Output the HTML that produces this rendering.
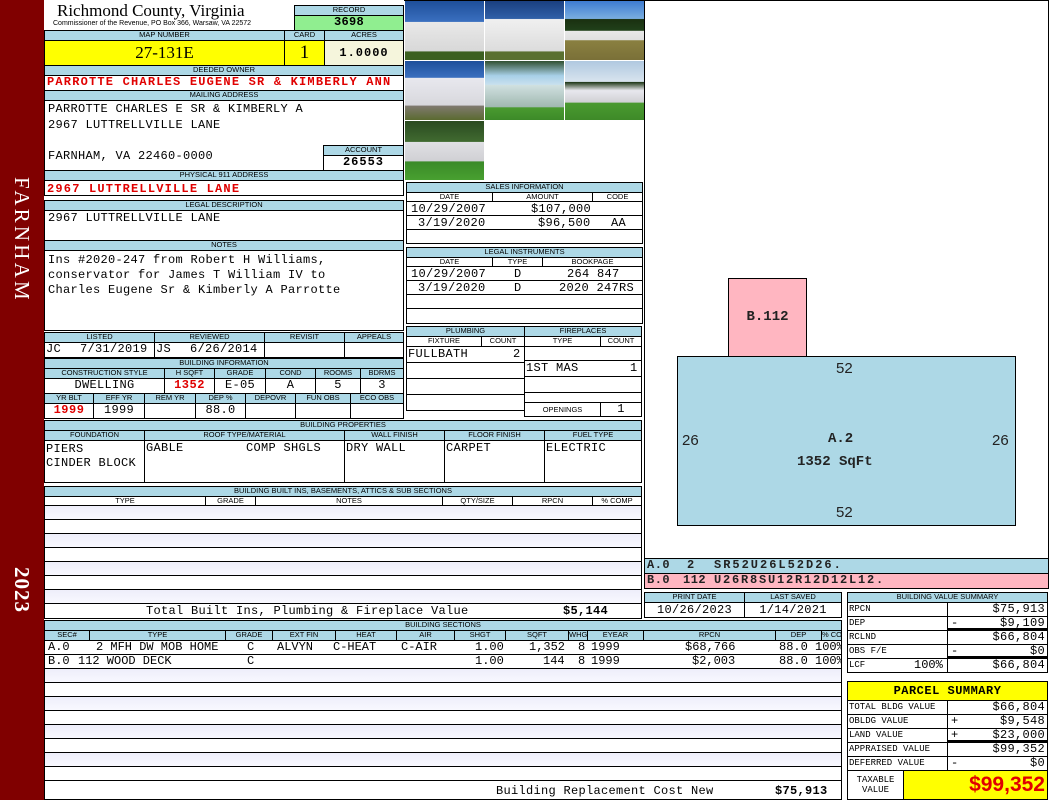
<!DOCTYPE html>
<html><head><meta charset="utf-8">
<style>
*{margin:0;padding:0;box-sizing:border-box}
body{width:1050px;height:800px;position:relative;background:#fff;overflow:hidden;font-family:"Liberation Mono",monospace;font-size:12px;color:#000}
.a{position:absolute}
.c{position:absolute;border:1px solid #000;overflow:hidden;white-space:nowrap}
.h{background:#add8e6;font-family:"Liberation Sans",sans-serif;font-size:7.5px;text-align:center;line-height:8px;letter-spacing:0}
.v{font-family:"Liberation Mono",monospace;font-size:12px;line-height:13px;letter-spacing:0.3px}
.ctr{text-align:center}
.r{text-align:right;padding-right:2px}
.red{color:#e00000;font-weight:bold;letter-spacing:1.2px}
.lav{background:linear-gradient(#eeeefa,#f8f8ff)}
.ph{position:absolute;width:79px;height:59px;overflow:hidden}
</style></head><body>
<div class="a" style="left:0;top:0;width:44px;height:800px;background:#800000"></div>
<div class="a" style="left:7px;top:177px;width:30px;height:130px;color:#fff;font-family:'Liberation Serif',serif;font-size:21px;letter-spacing:3.2px;writing-mode:vertical-rl;line-height:30px">FARNHAM</div>
<div class="a" style="left:7px;top:567px;width:30px;height:60px;color:#fff;font-family:'Liberation Serif',serif;font-size:21px;font-weight:bold;letter-spacing:1px;writing-mode:vertical-rl;line-height:30px">2023</div>

<div class="a" style="left:57px;top:1px;font-family:'Liberation Serif',serif;font-size:17px;line-height:20px">Richmond County, Virginia</div>
<div class="a" style="left:53px;top:19px;font-family:'Liberation Sans',sans-serif;font-size:7px;line-height:9px">Commissioner of the Revenue, PO Box 366, Warsaw, VA 22572</div>
<div class="c h" style="left:294px;top:5px;width:110px;height:11px">RECORD</div>
<div class="c v ctr" style="left:294px;top:15px;width:110px;height:16px;background:#90ee90;font-weight:bold">3698</div>

<div class="c h" style="left:44px;top:30px;width:241px;height:11px">MAP NUMBER</div>
<div class="c h" style="left:284px;top:30px;width:41px;height:11px">CARD</div>
<div class="c h" style="left:324px;top:30px;width:80px;height:11px">ACRES</div>
<div class="c ctr" style="left:44px;top:40px;width:241px;height:26px;background:#ffff00;font-family:'Liberation Serif',serif;font-size:17px;line-height:24px">27-131E</div>
<div class="c ctr" style="left:284px;top:40px;width:41px;height:26px;background:#ffff00;font-family:'Liberation Serif',serif;font-size:19px;line-height:24px">1</div>
<div class="c ctr" style="left:324px;top:40px;width:80px;height:26px;background:#f5f5dc;font-weight:bold;font-size:12px;line-height:24px;letter-spacing:1px">1.0000</div>

<div class="c h" style="left:44px;top:65px;width:360px;height:11px">DEEDED OWNER</div>
<div class="c v red" style="left:44px;top:75px;width:360px;height:16px;padding-left:2px">PARROTTE CHARLES EUGENE SR &amp; KIMBERLY ANN</div>
<div class="c h" style="left:44px;top:90px;width:360px;height:11px">MAILING ADDRESS</div>
<div class="c v" style="left:44px;top:100px;width:360px;height:71px;padding-left:3px;line-height:15.5px;padding-top:1px">PARROTTE CHARLES E SR &amp; KIMBERLY A<br>2967 LUTTRELLVILLE LANE<br><br>FARNHAM, VA 22460-0000</div>
<div class="c h" style="left:323px;top:145px;width:81px;height:11px">ACCOUNT</div>
<div class="c v ctr" style="left:323px;top:155px;width:81px;height:16px;font-weight:bold;background:#fff;letter-spacing:1px">26553</div>
<div class="c h" style="left:44px;top:170px;width:360px;height:11px">PHYSICAL 911 ADDRESS</div>
<div class="c v red" style="left:44px;top:180px;width:360px;height:16px;padding-left:2px;line-height:16px">2967 LUTTRELLVILLE LANE</div>

<div class="c h" style="left:44px;top:200px;width:360px;height:11px">LEGAL DESCRIPTION</div>
<div class="c v" style="left:44px;top:210px;width:360px;height:31px;padding-left:3px;padding-top:1px">2967 LUTTRELLVILLE LANE</div>
<div class="c h" style="left:44px;top:240px;width:360px;height:11px">NOTES</div>
<div class="c v" style="left:44px;top:250px;width:360px;height:81px;padding-left:3px;line-height:15px;padding-top:2px">Ins #2020-247 from Robert H Williams,<br>conservator for James T William IV to<br>Charles Eugene Sr &amp; Kimberly A Parrotte</div>

<div class="c h" style="left:44px;top:332px;width:111px;height:11px">LISTED</div>
<div class="c h" style="left:154px;top:332px;width:111px;height:11px">REVIEWED</div>
<div class="c h" style="left:264px;top:332px;width:81px;height:11px">REVISIT</div>
<div class="c h" style="left:344px;top:332px;width:60px;height:11px">APPEALS</div>
<div class="c v" style="left:44px;top:342px;width:111px;height:16px;padding-left:1px"><span class="a" style="left:1px">JC</span><span class="a" style="left:35px">7/31/2019</span></div>
<div class="c v" style="left:154px;top:342px;width:111px;height:16px;padding-left:1px"><span class="a" style="left:1px">JS</span><span class="a" style="left:35px">6/26/2014</span></div>
<div class="c" style="left:264px;top:342px;width:81px;height:16px"></div>
<div class="c" style="left:344px;top:342px;width:60px;height:16px"></div>

<div class="c h" style="left:44px;top:358px;width:360px;height:11px">BUILDING INFORMATION</div>
<div class="c h" style="left:44px;top:368px;width:121px;height:11px">CONSTRUCTION STYLE</div>
<div class="c h" style="left:164px;top:368px;width:51px;height:11px">H SQFT</div>
<div class="c h" style="left:214px;top:368px;width:52px;height:11px">GRADE</div>
<div class="c h" style="left:265px;top:368px;width:51px;height:11px">COND</div>
<div class="c h" style="left:315px;top:368px;width:46px;height:11px">ROOMS</div>
<div class="c h" style="left:360px;top:368px;width:44px;height:11px">BDRMS</div>
<div class="c v ctr" style="left:44px;top:378px;width:121px;height:16px">DWELLING</div>
<div class="c v ctr red" style="left:164px;top:378px;width:51px;height:16px;letter-spacing:0.5px">1352</div>
<div class="c v ctr" style="left:214px;top:378px;width:52px;height:16px">E-05</div>
<div class="c v ctr" style="left:265px;top:378px;width:51px;height:16px">A</div>
<div class="c v ctr" style="left:315px;top:378px;width:46px;height:16px">5</div>
<div class="c v ctr" style="left:360px;top:378px;width:44px;height:16px">3</div>
<div class="c h" style="left:44px;top:393px;width:50px;height:11px">YR BLT</div>
<div class="c h" style="left:93px;top:393px;width:52px;height:11px">EFF YR</div>
<div class="c h" style="left:144px;top:393px;width:52px;height:11px">REM YR</div>
<div class="c h" style="left:195px;top:393px;width:51px;height:11px">DEP %</div>
<div class="c h" style="left:245px;top:393px;width:51px;height:11px">DEPOVR</div>
<div class="c h" style="left:295px;top:393px;width:56px;height:11px">FUN OBS</div>
<div class="c h" style="left:350px;top:393px;width:54px;height:11px">ECO OBS</div>
<div class="c v ctr red" style="left:44px;top:403px;width:50px;height:16px;letter-spacing:0.5px">1999</div>
<div class="c v ctr" style="left:93px;top:403px;width:52px;height:16px">1999</div>
<div class="c" style="left:144px;top:403px;width:52px;height:16px"></div>
<div class="c v ctr" style="left:195px;top:403px;width:51px;height:16px">88.0</div>
<div class="c" style="left:245px;top:403px;width:51px;height:16px"></div>
<div class="c" style="left:295px;top:403px;width:56px;height:16px"></div>
<div class="c" style="left:350px;top:403px;width:54px;height:16px"></div>

<!-- photos -->
<div class="a" style="left:404px;top:0;width:240px;height:181px;background:#fff;border-top:1px solid #000"></div>
<div class="ph" style="left:405px;top:1px;background:linear-gradient(#1e4f9a 0,#3a6fbf 35%,#e8e8e8 36%,#d8d8d8 85%,#3c6020 86%)"></div>
<div class="ph" style="left:485px;top:1px;background:linear-gradient(#1a3f80 0,#3060a8 30%,#f0f0f0 31%,#dcdcdc 85%,#5a7030 86%)"></div>
<div class="ph" style="left:565px;top:1px;background:linear-gradient(#3d7bd0 0,#7aaee0 30%,#1a3010 31%,#20401a 50%,#e8e8e8 51%,#e0e0e0 66%,#8a8040 67%,#7a7038)"></div>
<div class="ph" style="left:405px;top:61px;background:linear-gradient(#1e4f9a 0,#3a6fbf 28%,#e8e8ee 29%,#d8d8dd 75%,#807a70 76%,#5a6a30)"></div>
<div class="ph" style="left:485px;top:61px;background:linear-gradient(#305030 0,#a8d0e8 25%,#c8e0ee 40%,#d0e0e0 41%,#a0b8b0 78%,#4a9a30 79%,#3c8a28)"></div>
<div class="ph" style="left:565px;top:61px;background:linear-gradient(#b0c8e0 0,#d8e4ee 35%,#203818 36%,#e8e8ee 50%,#d0d0d4 70%,#4a9a30 71%,#3e8a28)"></div>
<div class="ph" style="left:405px;top:121px;background:linear-gradient(#2a4a20 0,#406a30 35%,#e0e0e4 36%,#d0d0d4 68%,#3a8a28 69%,#48a030)"></div>

<!-- sales -->
<div class="c h" style="left:406px;top:182px;width:237px;height:11px">SALES INFORMATION</div>
<div class="c h" style="left:406px;top:192px;width:87px;height:10px;background:#fff">DATE</div>
<div class="c h" style="left:492px;top:192px;width:101px;height:10px;background:#fff">AMOUNT</div>
<div class="c h" style="left:592px;top:192px;width:51px;height:10px;background:#fff">CODE</div>
<div class="c v" style="left:406px;top:201px;width:237px;height:15px;line-height:14px"><span class="a" style="left:4px">10/29/2007</span><span class="a" style="left:124px">$107,000</span></div>
<div class="c v" style="left:406px;top:215px;width:237px;height:15px;line-height:14px"><span class="a" style="left:11px">3/19/2020</span><span class="a" style="left:131px">$96,500</span><span class="a" style="left:204px">AA</span></div>
<div class="c" style="left:406px;top:229px;width:237px;height:15px"></div>

<div class="c h" style="left:406px;top:247px;width:237px;height:11px">LEGAL INSTRUMENTS</div>
<div class="c h" style="left:406px;top:257px;width:87px;height:10px;background:#fff">DATE</div>
<div class="c h" style="left:492px;top:257px;width:51px;height:10px;background:#fff">TYPE</div>
<div class="c h" style="left:542px;top:257px;width:101px;height:10px;background:#fff">BOOKPAGE</div>
<div class="c v" style="left:406px;top:266px;width:237px;height:15px;line-height:14px"><span class="a" style="left:4px">10/29/2007</span><span class="a" style="left:107px">D</span><span class="a" style="left:160px">264 847</span></div>
<div class="c v" style="left:406px;top:280px;width:237px;height:15px;line-height:14px"><span class="a" style="left:11px">3/19/2020</span><span class="a" style="left:107px">D</span><span class="a" style="left:152px">2020 247RS</span></div>
<div class="c" style="left:406px;top:294px;width:237px;height:15px"></div>
<div class="c" style="left:406px;top:308px;width:237px;height:16px"></div>

<!-- plumbing / fireplaces -->
<div class="c h" style="left:406px;top:326px;width:119px;height:11px">PLUMBING</div>
<div class="c h" style="left:524px;top:326px;width:118px;height:11px">FIREPLACES</div>
<div class="c h" style="left:406px;top:336px;width:76px;height:11px;background:#fff">FIXTURE</div>
<div class="c h" style="left:481px;top:336px;width:44px;height:11px;background:#fff">COUNT</div>
<div class="c h" style="left:524px;top:336px;width:77px;height:11px;background:#fff">TYPE</div>
<div class="c h" style="left:600px;top:336px;width:42px;height:11px;background:#fff">COUNT</div>
<div class="c v" style="left:406px;top:346px;width:119px;height:17px;line-height:15px"><span class="a" style="left:1px">FULLBATH</span><span class="a" style="left:106px">2</span></div>
<div class="c" style="left:406px;top:362px;width:119px;height:17px"></div>
<div class="c" style="left:406px;top:378px;width:119px;height:17px"></div>
<div class="c" style="left:406px;top:394px;width:119px;height:17px"></div>
<div class="c" style="left:524px;top:346px;width:118px;height:15px"></div>
<div class="c v" style="left:524px;top:360px;width:118px;height:17px;line-height:15px"><span class="a" style="left:1px">1ST MAS</span><span class="a" style="left:105px">1</span></div>
<div class="c" style="left:524px;top:376px;width:118px;height:17px"></div>
<div class="c" style="left:524px;top:392px;width:118px;height:11px"></div>
<div class="c h" style="left:524px;top:402px;width:77px;height:15px;background:#fff;line-height:13px">OPENINGS</div>
<div class="c v ctr" style="left:600px;top:402px;width:42px;height:15px">1</div>

<!-- building properties -->
<div class="c h" style="left:44px;top:420px;width:598px;height:11px">BUILDING PROPERTIES</div>
<div class="c h" style="left:44px;top:430px;width:101px;height:11px">FOUNDATION</div>
<div class="c h" style="left:144px;top:430px;width:201px;height:11px">ROOF TYPE/MATERIAL</div>
<div class="c h" style="left:344px;top:430px;width:101px;height:11px">WALL FINISH</div>
<div class="c h" style="left:444px;top:430px;width:101px;height:11px">FLOOR FINISH</div>
<div class="c h" style="left:544px;top:430px;width:98px;height:11px">FUEL TYPE</div>
<div class="c v" style="left:44px;top:440px;width:101px;height:43px;padding-left:1px;line-height:14px;padding-top:1px">PIERS<br>CINDER BLOCK</div>
<div class="c v" style="left:144px;top:440px;width:201px;height:43px;padding-top:1px"><span class="a" style="left:1px">GABLE</span><span class="a" style="left:101px">COMP SHGLS</span></div>
<div class="c v" style="left:344px;top:440px;width:101px;height:43px;padding-left:1px;padding-top:1px">DRY WALL</div>
<div class="c v" style="left:444px;top:440px;width:101px;height:43px;padding-left:1px;padding-top:1px">CARPET</div>
<div class="c v" style="left:544px;top:440px;width:98px;height:43px;padding-left:1px;padding-top:1px">ELECTRIC</div>

<!-- built ins -->
<div class="c h" style="left:44px;top:486px;width:598px;height:11px">BUILDING BUILT INS, BASEMENTS, ATTICS &amp; SUB SECTIONS</div>
<div class="c h" style="left:44px;top:496px;width:162px;height:10px;background:#fff">TYPE</div>
<div class="c h" style="left:205px;top:496px;width:51px;height:10px;background:#fff">GRADE</div>
<div class="c h" style="left:255px;top:496px;width:188px;height:10px;background:#fff">NOTES</div>
<div class="c h" style="left:442px;top:496px;width:71px;height:10px;background:#fff">QTY/SIZE</div>
<div class="c h" style="left:512px;top:496px;width:81px;height:10px;background:#fff">RPCN</div>
<div class="c h" style="left:592px;top:496px;width:50px;height:10px;background:#fff">% COMP</div>
<div class="c lav" style="left:44px;top:505px;width:598px;height:15px"></div>
<div class="c" style="left:44px;top:519px;width:598px;height:15px"></div>
<div class="c lav" style="left:44px;top:533px;width:598px;height:15px"></div>
<div class="c" style="left:44px;top:547px;width:598px;height:15px"></div>
<div class="c lav" style="left:44px;top:561px;width:598px;height:15px"></div>
<div class="c" style="left:44px;top:575px;width:598px;height:15px"></div>
<div class="c lav" style="left:44px;top:589px;width:598px;height:15px"></div>
<div class="c v" style="left:44px;top:603px;width:598px;height:16px;line-height:15px"><span class="a" style="left:101px">Total Built Ins, Plumbing &amp; Fireplace Value</span><span class="a" style="left:518px;font-weight:bold">$5,144</span></div>

<!-- building sections -->
<div class="c h" style="left:44px;top:620px;width:798px;height:11px">BUILDING SECTIONS</div>
<div class="a" style="left:44px;top:630px">
<div class="c h" style="left:0;top:0;width:46px;height:11px">SEC#</div>
<div class="c h" style="left:45px;top:0;width:137px;height:11px">TYPE</div>
<div class="c h" style="left:181px;top:0;width:48px;height:11px">GRADE</div>
<div class="c h" style="left:228px;top:0;width:64px;height:11px">EXT FIN</div>
<div class="c h" style="left:291px;top:0;width:62px;height:11px">HEAT</div>
<div class="c h" style="left:352px;top:0;width:59px;height:11px">AIR</div>
<div class="c h" style="left:410px;top:0;width:52px;height:11px">SHGT</div>
<div class="c h" style="left:461px;top:0;width:64px;height:11px">SQFT</div>
<div class="c h" style="left:524px;top:0;width:20px;height:11px">WHGT</div>
<div class="c h" style="left:543px;top:0;width:57px;height:11px">EYEAR</div>
<div class="c h" style="left:599px;top:0;width:133px;height:11px">RPCN</div>
<div class="c h" style="left:731px;top:0;width:47px;height:11px">DEP</div>
<div class="c h" style="left:777px;top:0;width:21px;height:11px">% COMP</div>
</div>
<div class="c v" style="left:44px;top:640px;width:798px;height:15px;letter-spacing:0"><span class="a" style="left:3px">A.0</span><span class="a" style="left:51px">2 MFH DW MOB HOME</span><span class="a" style="left:202px">C</span><span class="a" style="left:232px">ALVYN</span><span class="a" style="left:288px">C-HEAT</span><span class="a" style="left:356px">C-AIR</span><span class="a" style="left:430px">1.00</span><span class="a" style="left:484px">1,352</span><span class="a" style="left:533px">8</span><span class="a" style="left:546px">1999</span><span class="a" style="left:640px">$68,766</span><span class="a" style="left:734px">88.0</span><span class="a" style="left:770px">100%</span></div>
<div class="c v" style="left:44px;top:654px;width:798px;height:15px;letter-spacing:0"><span class="a" style="left:3px">B.0</span><span class="a" style="left:33px">112 WOOD DECK</span><span class="a" style="left:202px">C</span><span class="a" style="left:430px">1.00</span><span class="a" style="left:498px">144</span><span class="a" style="left:533px">8</span><span class="a" style="left:546px">1999</span><span class="a" style="left:647px">$2,003</span><span class="a" style="left:734px">88.0</span><span class="a" style="left:770px">100%</span></div>
<div class="c lav" style="left:44px;top:668px;width:798px;height:15px"></div>
<div class="c" style="left:44px;top:682px;width:798px;height:15px"></div>
<div class="c lav" style="left:44px;top:696px;width:798px;height:15px"></div>
<div class="c" style="left:44px;top:710px;width:798px;height:15px"></div>
<div class="c lav" style="left:44px;top:724px;width:798px;height:15px"></div>
<div class="c" style="left:44px;top:738px;width:798px;height:15px"></div>
<div class="c lav" style="left:44px;top:752px;width:798px;height:15px"></div>
<div class="c" style="left:44px;top:766px;width:798px;height:15px"></div>
<div class="c v" style="left:44px;top:780px;width:798px;height:20px;line-height:20px"><span class="a" style="left:451px">Building Replacement Cost New</span><span class="a" style="left:730px;font-weight:bold">$75,913</span></div>

<!-- sketch -->
<div class="c" style="left:644px;top:0;width:405px;height:559px;background:#fff"></div>
<div class="a" style="left:728px;top:278px;width:79px;height:79px;background:#ffb6c1;border:1px solid #000;font-size:14px;font-weight:bold;color:#222;text-align:center;padding-top:30px">B.112</div>
<div class="a" style="left:677px;top:356px;width:339px;height:170px;background:#add8e6;border:1px solid #000;color:#222">
<div class="a" style="left:158px;top:3px;font-family:'Liberation Sans',sans-serif;font-size:15px">52</div>
<div class="a" style="left:158px;top:147px;font-family:'Liberation Sans',sans-serif;font-size:15px">52</div>
<div class="a" style="left:4px;top:75px;font-family:'Liberation Sans',sans-serif;font-size:15px">26</div>
<div class="a" style="left:314px;top:75px;font-family:'Liberation Sans',sans-serif;font-size:15px">26</div>
<div class="a" style="left:150px;top:74px;font-size:14px;font-weight:bold">A.2</div>
<div class="a" style="left:119px;top:97px;font-size:14px;font-weight:bold">1352 SqFt</div>
</div>
<div class="c v" style="left:644px;top:558px;width:405px;height:16px;background:#add8e6;font-weight:bold;color:#222;letter-spacing:0.5px"><span class="a" style="left:2px">A.0</span><span class="a" style="left:42px">2</span><span class="a" style="left:69px;letter-spacing:2px">SR52U26L52D26.</span></div>
<div class="c v" style="left:644px;top:573px;width:405px;height:16px;background:#ffb6c1;font-weight:bold;color:#222;letter-spacing:0.5px"><span class="a" style="left:2px">B.0</span><span class="a" style="left:38px">112</span><span class="a" style="left:69px;letter-spacing:1.8px">U26R8SU12R12D12L12.</span></div>

<div class="c h" style="left:644px;top:592px;width:101px;height:11px">PRINT DATE</div>
<div class="c h" style="left:744px;top:592px;width:98px;height:11px">LAST SAVED</div>
<div class="c v ctr" style="left:644px;top:602px;width:101px;height:16px;font-size:12px;line-height:14px">10/26/2023</div>
<div class="c v ctr" style="left:744px;top:602px;width:98px;height:16px;font-size:12px;line-height:14px">1/14/2021</div>

<!-- building value summary -->
<div class="c h" style="left:847px;top:592px;width:201px;height:11px">BUILDING VALUE SUMMARY</div>
<div class="c v" style="left:847px;top:602px;width:101px;height:15px;font-size:9px;padding-left:1px;letter-spacing:0">RPCN</div>
<div class="c v r" style="left:947px;top:602px;width:101px;height:15px">$75,913</div>
<div class="c v" style="left:847px;top:616px;width:101px;height:15px;font-size:9px;padding-left:1px;letter-spacing:0">DEP</div>
<div class="c v r" style="left:947px;top:616px;width:101px;height:15px;border-bottom:3px solid #000"><span class="a" style="left:3px">-</span>$9,109</div>
<div class="c v" style="left:847px;top:630px;width:101px;height:15px;font-size:9px;padding-left:1px;letter-spacing:0">RCLND</div>
<div class="c v r" style="left:947px;top:630px;width:101px;height:15px">$66,804</div>
<div class="c v" style="left:847px;top:644px;width:101px;height:15px;font-size:9px;padding-left:1px;letter-spacing:0">OBS F/E</div>
<div class="c v r" style="left:947px;top:644px;width:101px;height:15px;border-bottom:3px solid #000"><span class="a" style="left:3px">-</span>$0</div>
<div class="c v" style="left:847px;top:658px;width:101px;height:15px;font-size:9px;padding-left:1px;letter-spacing:0">LCF<span class="a" style="left:66px;font-size:12px">100%</span></div>
<div class="c v r" style="left:947px;top:658px;width:101px;height:15px">$66,804</div>

<!-- parcel summary -->
<div class="c ctr" style="left:847px;top:681px;width:201px;height:20px;background:#ffff00;font-weight:bold;font-size:12px;line-height:18px;font-family:'Liberation Mono',monospace;letter-spacing:0.5px">PARCEL SUMMARY</div>
<div class="c v" style="left:847px;top:700px;width:101px;height:15px;font-size:9px;padding-left:1px;letter-spacing:0">TOTAL BLDG VALUE</div>
<div class="c v r" style="left:947px;top:700px;width:101px;height:15px">$66,804</div>
<div class="c v" style="left:847px;top:714px;width:101px;height:15px;font-size:9px;padding-left:1px;letter-spacing:0">OBLDG VALUE</div>
<div class="c v r" style="left:947px;top:714px;width:101px;height:15px"><span class="a" style="left:3px">+</span>$9,548</div>
<div class="c v" style="left:847px;top:728px;width:101px;height:15px;font-size:9px;padding-left:1px;letter-spacing:0">LAND VALUE</div>
<div class="c v r" style="left:947px;top:728px;width:101px;height:15px;border-bottom:3px solid #000"><span class="a" style="left:3px">+</span>$23,000</div>
<div class="c v" style="left:847px;top:742px;width:101px;height:15px;font-size:9px;padding-left:1px;letter-spacing:0">APPRAISED VALUE</div>
<div class="c v r" style="left:947px;top:742px;width:101px;height:15px">$99,352</div>
<div class="c v" style="left:847px;top:756px;width:101px;height:15px;font-size:9px;padding-left:1px;letter-spacing:0">DEFERRED VALUE</div>
<div class="c v r" style="left:947px;top:756px;width:101px;height:15px"><span class="a" style="left:3px">-</span>$0</div>
<div class="c ctr" style="left:847px;top:770px;width:57px;height:30px;font-size:9px;line-height:10px;padding-top:4px">TAXABLE<br>VALUE</div>
<div class="c r" style="left:903px;top:770px;width:145px;height:30px;background:#ffff00;color:#e00000;font-family:'Liberation Sans',sans-serif;font-weight:bold;font-size:21px;line-height:28px">$99,352</div>
</body></html>
